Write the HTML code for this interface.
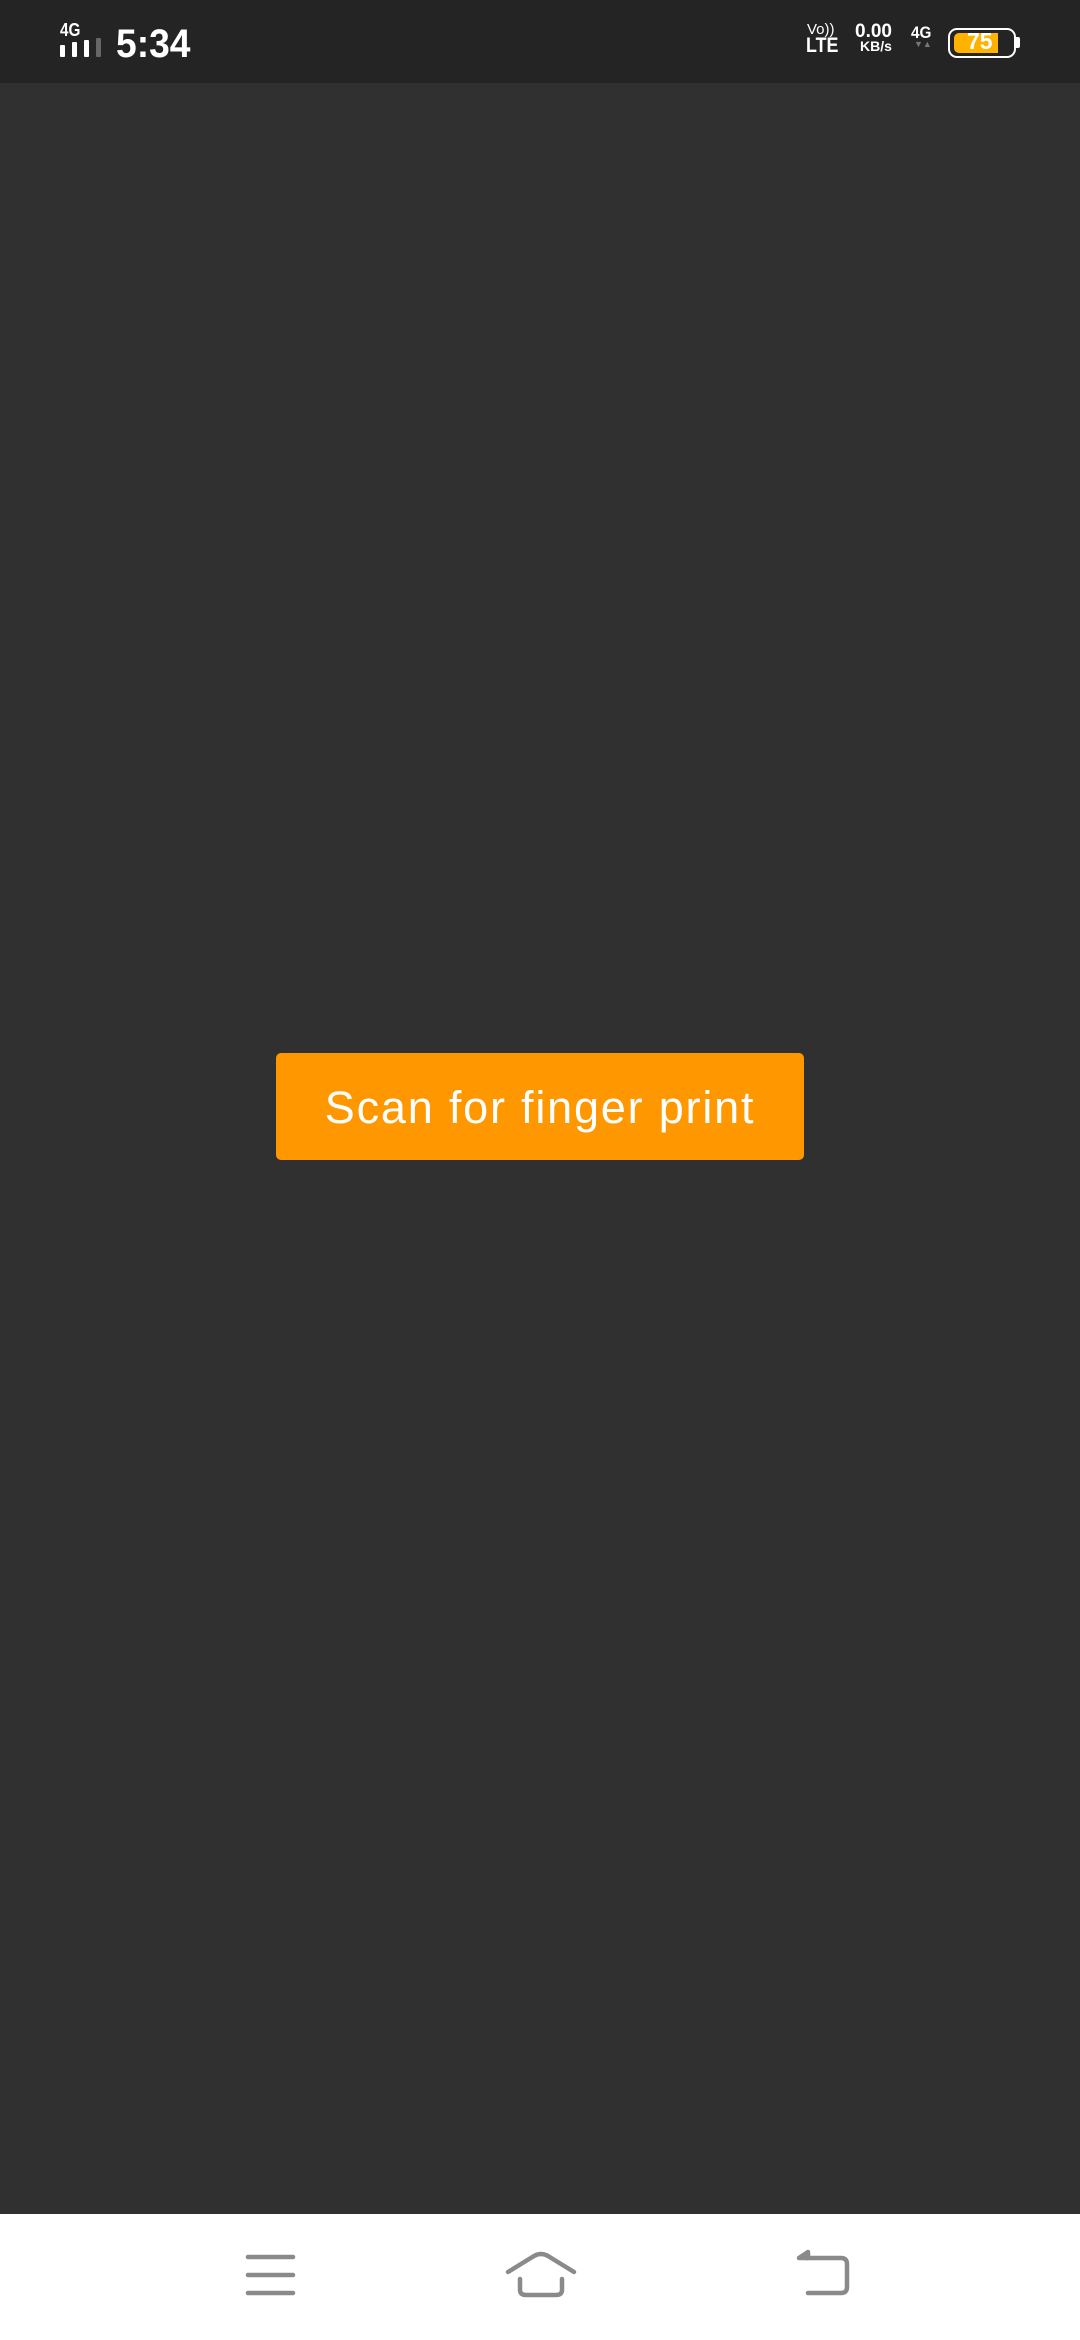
<!DOCTYPE html>
<html><head><meta charset="utf-8"><style>
html,body{margin:0;padding:0;width:1080px;height:2340px;overflow:hidden;background:#303030;font-family:"Liberation Sans",sans-serif}
.sb{position:absolute;left:0;top:0;width:1080px;height:83px;background:#242424;color:#fff}
.t{position:absolute;font-weight:bold;line-height:1;white-space:nowrap}
.nav{position:absolute;left:0;top:2214px;width:1080px;height:126px;background:#fff}
.btn{position:absolute;left:276px;top:1053px;width:528px;height:107px;background:#FF9800;border-radius:5px;color:#fff;font-size:45px;text-align:center;line-height:110px;letter-spacing:1.8px}
</style></head><body>
<div class="sb">
 <div class="t" style="left:60px;top:21px;font-size:18px;transform:scaleX(0.85);transform-origin:left">4G</div>
 <svg style="position:absolute;left:60px;top:38px" width="45" height="20">
  <rect x="0" y="7" width="5" height="12" rx="1" fill="#fff"/>
  <rect x="12" y="4" width="5" height="15" rx="1" fill="#fff"/>
  <rect x="24" y="2" width="5" height="17" rx="1" fill="#fff"/>
  <rect x="36" y="0" width="5" height="19" rx="1" fill="#666"/>
 </svg>
 <div class="t" style="left:116px;top:24px;font-size:40px;transform:scaleX(0.93);transform-origin:left">5:34</div>
 <div class="t" style="left:807px;top:22px;font-size:15px;font-weight:normal">Vo))</div>
 <div class="t" style="left:806px;top:35px;font-size:21px;transform:scaleX(0.85);transform-origin:left">LTE</div>
 <div class="t" style="left:855px;top:22px;font-size:19px">0.00</div>
 <div class="t" style="left:860px;top:39px;font-size:14px">KB/s</div>
 <div class="t" style="left:911px;top:24px;font-size:17px;transform:scaleX(0.9);transform-origin:left">4G</div>
 <div class="t" style="left:914px;top:40px;font-size:9px;color:#777">▼▲</div>
 <div style="position:absolute;left:948px;top:28px;width:64px;height:26px;border:2.5px solid #fff;border-radius:9px"></div>
 <div style="position:absolute;left:1016px;top:37px;width:4px;height:11px;background:#fff;border-radius:0 2px 2px 0"></div>
 <div style="position:absolute;left:954px;top:33px;width:44px;height:20px;background:#FFB300;border-radius:5px 0 0 5px"></div>
 <div class="t" style="left:967px;top:30px;font-size:23px">75</div>
</div>
<div class="btn">Scan for finger print</div>
<div class="nav">
 <svg width="1080" height="126" style="position:absolute;left:0;top:0" fill="none" stroke="#8a8a8a" stroke-width="4.5" stroke-linecap="round" stroke-linejoin="round">
  <path d="M248 43H293M248 61H293M248 79H293"/>
  <path d="M508 58L534 42Q541 38 548 42L574 58"/>
  <path d="M520 65V76Q520 81 526 81H556Q562 81 562 76V65"/>
  <path d="M806 44H841Q847 44 847 50V73Q847 79 841 79H808"/>
  <path d="M799 44L808 38V44Z" fill="#8a8a8a"/>
 </svg>
</div>
</body></html>
